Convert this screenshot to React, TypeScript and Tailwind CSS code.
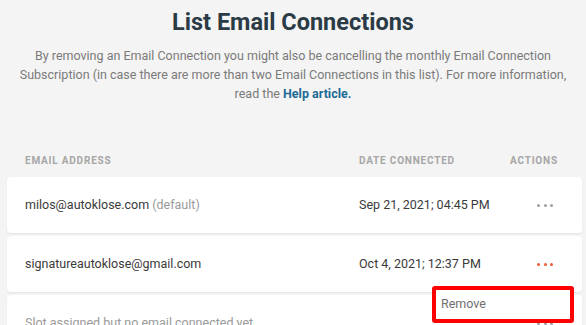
import React from "react";

function Dots({ color }: { color: string }) {
  return (
    <div className="flex items-center gap-[3.5px]">
      <span className={`block w-[3px] h-[3px] rounded-full ${color}`} />
      <span className={`block w-[3px] h-[3px] rounded-full ${color}`} />
      <span className={`block w-[3px] h-[3px] rounded-full ${color}`} />
    </div>
  );
}

function Row({
  email,
  extra,
  date,
  dots,
  muted,
}: {
  email: string;
  extra?: string;
  date?: string;
  dots: string;
  muted?: boolean;
}) {
  return (
    <div className="grid grid-cols-[1fr_146px_77px] items-center h-[56px] pl-[18px] bg-white rounded-[4px] shadow-[0_1px_2px_rgba(0,0,0,0.07)]">
      <div className={`text-[12.5px] ${muted ? "text-[#9a9a9a]" : "text-[#3a3a3a]"}`}>
        {email}
        {extra && <span className="text-[#9a9a9a]"> {extra}</span>}
      </div>
      <div className="text-[12.5px] text-[#3a3a3a]">{date}</div>
      <div className="pl-[32px]">
        <Dots color={dots} />
      </div>
    </div>
  );
}

export default function App() {
  return (
    <div className="relative w-[586px] h-[325px] overflow-hidden bg-[#f4f4f4] font-['Roboto',sans-serif]">
      <div className="pt-[8px] text-center">
        <h1 className="text-[23.5px] leading-[28px] font-bold text-[#2b3b45]">List Email Connections</h1>
        <p className="mt-[10px] px-[12px] text-[12.5px] leading-[19px] text-[#7a7a7a]">
          By removing an Email Connection you might also be cancelling the monthly Email Connection Subscription (in case
          there are more than two Email Connections in this list). For more information, read the{" "}
          <a className="font-bold text-[#1d6b96]">Help article.</a>
        </p>
      </div>
      <div className="pl-[7px] pr-[4px] mt-[50px]">
        <div className="grid grid-cols-[1fr_146px_77px] pl-[18px] text-[10px] font-bold tracking-[0.08em] text-[#a6a6a6] uppercase">
          <div>Email Address</div>
          <div>Date Connected</div>
          <div className="pl-[5px]">Actions</div>
        </div>
        <div className="mt-[9px] flex flex-col gap-[3px]">
          <Row email="milos@autoklose.com" extra="(default)" date="Sep 21, 2021; 04:45 PM" dots="bg-[#9e9e9e]" />
          <Row email="signatureautoklose@gmail.com" date="Oct 4, 2021; 12:37 PM" dots="bg-[#ec5b34]" />
          <Row email="Slot assigned but no email connected yet" dots="bg-[#9e9e9e]" muted />
        </div>
      </div>
      <div className="absolute left-[432px] top-[286px] w-[142px] h-[37px] border-[4px] border-[#ff0000] rounded-[3px] bg-white flex items-center pl-[5px]">
        <span className="text-[12.5px] text-[#6f6f6f]">Remove</span>
      </div>
    </div>
  );
}
